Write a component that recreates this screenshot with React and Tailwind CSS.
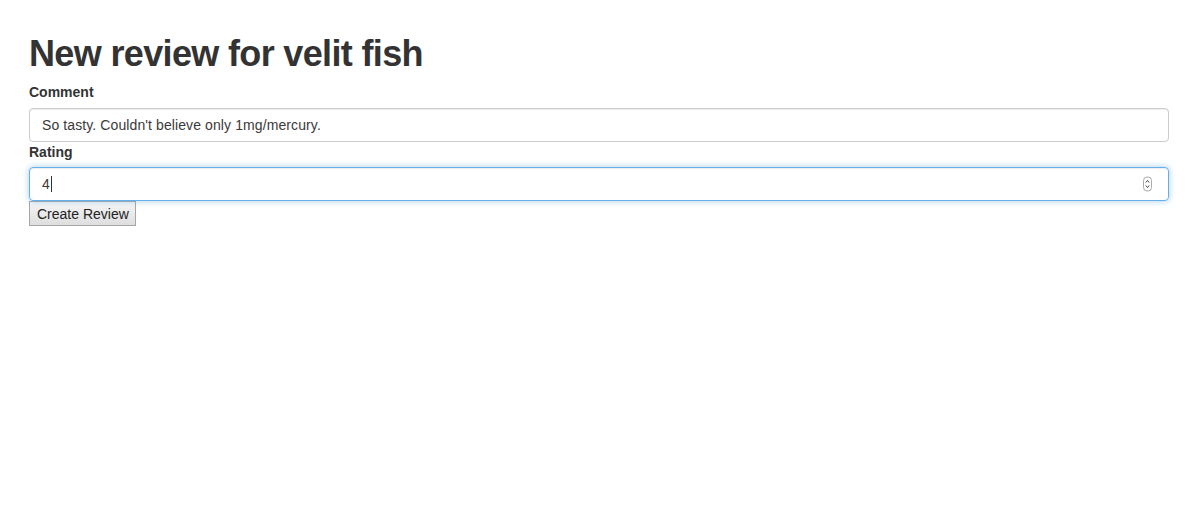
export default function App() {
  return (
    <div className="min-h-[514px] bg-white pl-[29px] pt-[34px] font-['Liberation_Sans',Arial,sans-serif] text-[#333]">
      <h1 className="mb-[8px] text-[36px] font-bold leading-[40px] tracking-[-0.65px]">New review for velit fish</h1>

      <label className="mb-[6px] block text-[14px] font-bold leading-[20px]">Comment</label>
      <div className="flex h-[34px] w-[1140px] items-center rounded-[4px] border border-[#ccc] px-[12px] text-[14px] tracking-[0.1px] text-[#3a3a3a] shadow-[inset_0_1px_1px_rgba(0,0,0,0.075)]">
        So tasty. Couldn't believe only 1mg/mercury.
      </div>

      <label className="mb-[5px] block text-[14px] font-bold leading-[20px]">Rating</label>
      <div className="relative flex h-[34px] w-[1140px] items-center rounded-[4px] border border-[#66afe9] px-[12px] text-[14px] text-[#3a3a3a] shadow-[inset_0_1px_1px_rgba(0,0,0,0.075),0_0_6px_rgba(102,175,233,0.6)]">
        <span>4</span>
        <span className="ml-[1px] inline-block h-[16px] w-px bg-[#333]" />
        <div className="absolute right-[16px] top-1/2 flex h-[15px] w-[9px] -translate-y-1/2 flex-col items-center justify-center rounded-[4px] border border-[#aaa] bg-white">
          <svg width="5" height="11" viewBox="0 0 5 11" fill="none" stroke="#444" strokeWidth="1">
            <path d="M0.8 4 L2.5 2 L4.2 4" />
            <path d="M0.8 7 L2.5 9 L4.2 7" />
          </svg>
        </div>
      </div>

      <button className="h-[25px] border border-[#a6a6a6] bg-gradient-to-b from-[#f6f6f6] to-[#dedede] pl-[7px] pr-[6px] text-[14px] leading-[20px] text-[#222]">
        Create Review
      </button>
    </div>
  )
}
